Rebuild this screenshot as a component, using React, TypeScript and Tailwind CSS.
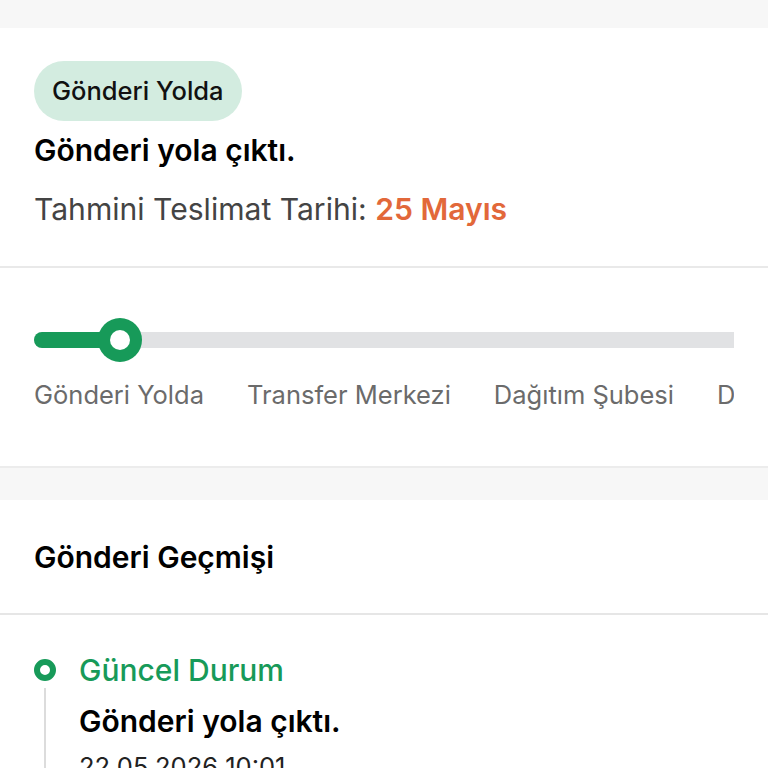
import React from 'react';

const steps = ['Gönderi Yolda', 'Transfer Merkezi', 'Dağıtım Şubesi', 'Dağıtımda', 'Teslim Edildi'];

const App = () => {
  return (
    <div className="min-h-screen bg-[#f7f7f7] pt-7 font-['Inter',sans-serif]">
      {/* Status card */}
      <div className="border-b-2 border-[#ececec] bg-white">
        <div className="border-b-2 border-[#e9e9e9] px-[34px] pt-[33px] pb-[39px]">
          <span className="inline-flex h-[60px] items-center rounded-full bg-[#d3ece0] px-[18px] text-[25.5px] font-medium text-[#111]">
            Gönderi Yolda
          </span>
          <div className="mt-[11px] text-[30px] font-semibold leading-[36px] text-black">
            Gönderi yola çıktı.
          </div>
          <div className="mt-[23px] text-[30.1px] leading-[36px] text-[#444]">
            Tahmini Teslimat Tarihi: <span className="font-semibold text-[#e2683a]">25 Mayıs</span>
          </div>
        </div>

        {/* Progress */}
        <div className="px-[34px] pt-[50px] pb-[55px]">
          <div className="relative h-[44px] w-[700px]">
            <div className="absolute left-0 right-0 top-[14px] h-4 rounded-l-full bg-[#e1e2e4]" />
            <div className="absolute left-0 top-[14px] h-4 w-[86px] rounded-l-full bg-[#179a59]" />
            <div className="absolute left-[64px] top-0 flex h-[44px] w-[44px] items-center justify-center rounded-full bg-[#179a59]">
              <div className="h-[20px] w-[20px] rounded-full bg-white" />
            </div>
          </div>
          <div className="mt-[17px] flex w-[700px] gap-[43px] overflow-hidden whitespace-nowrap text-[25.5px] leading-[32px] text-[#6b6b6b]">
            {steps.map((s) => (
              <span key={s} className="shrink-0">
                {s}
              </span>
            ))}
          </div>
        </div>
      </div>

      {/* History card */}
      <div className="mt-8 bg-white">
        <div className="border-b-2 border-[#e6e6e6] px-[34px] pt-[39px] pb-[38px] text-[30px] font-semibold leading-[36px] text-black">
          Gönderi Geçmişi
        </div>
        <div className="px-[34px] pt-[37px]">
          <div className="flex gap-[23px]">
            <div className="flex w-[22px] flex-col items-center">
              <div className="mt-[7px] h-[22px] w-[22px] rounded-full border-[6px] border-[#179a59] bg-white" />
              <div className="mt-[7px] h-[140px] w-[2px] bg-[#dcdcdc]" />
            </div>
            <div>
              <div className="text-[30px] font-medium leading-[36px] text-[#179a59]">Güncel Durum</div>
              <div className="mt-[15px] text-[30px] font-semibold leading-[36px] text-black">
                Gönderi yola çıktı.
              </div>
              <div className="mt-[12px] text-[25.5px] leading-[32px] text-[#222]">22.05.2026 10:01</div>
            </div>
          </div>
        </div>
      </div>
    </div>
  );
};

export default App;
